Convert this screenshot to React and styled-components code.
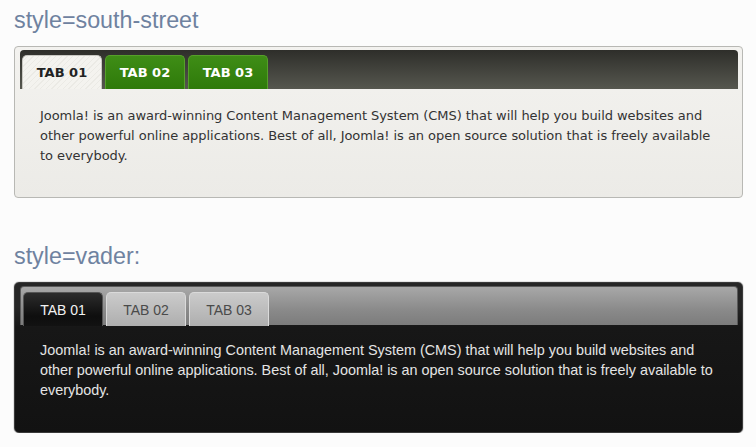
import React from 'react'
import styled, { createGlobalStyle, css } from 'styled-components'

const Global = createGlobalStyle`
  html, body {
    margin: 0;
    background: #fcfcfc;
  }
`

const Page = styled.div`
  width: 729px;
  padding: 6px 0 0 14px;
`

const Title = styled.h2`
  margin: 0;
  height: 40px;
  font-family: "Liberation Sans", Arial, sans-serif;
  font-weight: normal;
  font-size: 23.3px;
  line-height: 28px;
  color: #6f82a0;
`

const Spacer = styled.div`
  height: 44px;
`

const themes = {
  south: {
    panel: css`
      border: 1px solid #b8b8b4;
      border-radius: 4px;
      background: linear-gradient(#f3f2ef, #ecebe7);
    `,
    bar: css`
      background: linear-gradient(#2e2e2a, #56574f);
    `,
    text: css`
      font-family: "DejaVu Sans", Verdana, sans-serif;
      font-size: 13px;
      letter-spacing: -0.05px;
      color: #333;
      padding: 17px 16px 31px 20px;
    `
  },
  vader: {
    panel: css`
      border: 1px solid #3a3a3a;
      border-radius: 5px;
      background: linear-gradient(#262626 0, #262626 16%, #171717 30%, #121212);
      box-shadow: 0 0 1px #000;
    `,
    bar: css`
      background: linear-gradient(#a8a8a8, #8a8a8a 60%, #7c7c7c);
      border: 1px solid #5a5a5a;
      border-bottom: none;
    `,
    text: css`
      font-family: "Liberation Sans", Arial, sans-serif;
      font-size: 14.4px;
      color: #e4e4e4;
      padding: 15px 14px 32px 20px;
    `
  }
}

const Panel = styled.div`
  box-sizing: border-box;
  width: 729px;
  padding: 3px 4px 0 5px;
  ${props => themes[props.variant].panel}
`

const TabBar = styled.div`
  display: flex;
  gap: 3px;
  height: 39px;
  box-sizing: border-box;
  padding: 5px 0 0 2px;
  border-radius: 4px 4px 0 0;
  ${props => themes[props.variant].bar}
`

const tabLook = {
  south: {
    on: css`
      background: repeating-linear-gradient(135deg, #f4f3ef 0 3px, #ebeae5 3px 4px);
      color: #222;
      font-weight: bold;
      border: 1px solid #c9c8c2;
      border-bottom: none;
    `,
    off: css`
      background: linear-gradient(#3f8d16, #2e7a0a);
      color: #fff;
      font-weight: bold;
      border: 1px solid #56a02a;
      border-bottom: none;
    `
  },
  vader: {
    on: css`
      background: linear-gradient(#2c2c2c, #0e0e0e 70%, #121212);
      color: #f2f2f2;
      border: 1px solid #555;
      border-bottom: none;
    `,
    off: css`
      background: linear-gradient(#cbcbcb, #aeaeae);
      color: #4a4a4a;
      border: 1px solid #dadada;
      border-bottom: none;
    `
  }
}

const Tab = styled.div`
  box-sizing: border-box;
  width: 80px;
  height: 34px;
  display: flex;
  align-items: center;
  justify-content: center;
  border-radius: 5px 5px 0 0;
  font-family: ${props => props.variant === 'south' ? '"DejaVu Sans", Verdana, sans-serif' : '"Liberation Sans", Arial, sans-serif'};
  font-size: ${props => props.variant === 'south' ? '13px' : '14px'};
  ${props => tabLook[props.variant][props.active ? 'on' : 'off']}
`

const Body = styled.p`
  margin: 0;
  line-height: 20px;
  ${props => themes[props.variant].text}
`

const copy = 'Joomla! is an award-winning Content Management System (CMS) that will help you build websites and other powerful online applications. Best of all, Joomla! is an open source solution that is freely available to everybody.'

const TabPanel = ({ variant }) => (
  <Panel variant={variant}>
    <TabBar variant={variant}>
      {['TAB 01', 'TAB 02', 'TAB 03'].map((t, i) => (
        <Tab key={t} variant={variant} active={i === 0}>{t}</Tab>
      ))}
    </TabBar>
    <Body variant={variant}>{copy}</Body>
  </Panel>
)

export default function App() {
  return (
    <Page>
      <Global />
      <Title>style=south-street</Title>
      <TabPanel variant="south" />
      <Spacer />
      <Title>style=vader:</Title>
      <TabPanel variant="vader" />
    </Page>
  )
}
